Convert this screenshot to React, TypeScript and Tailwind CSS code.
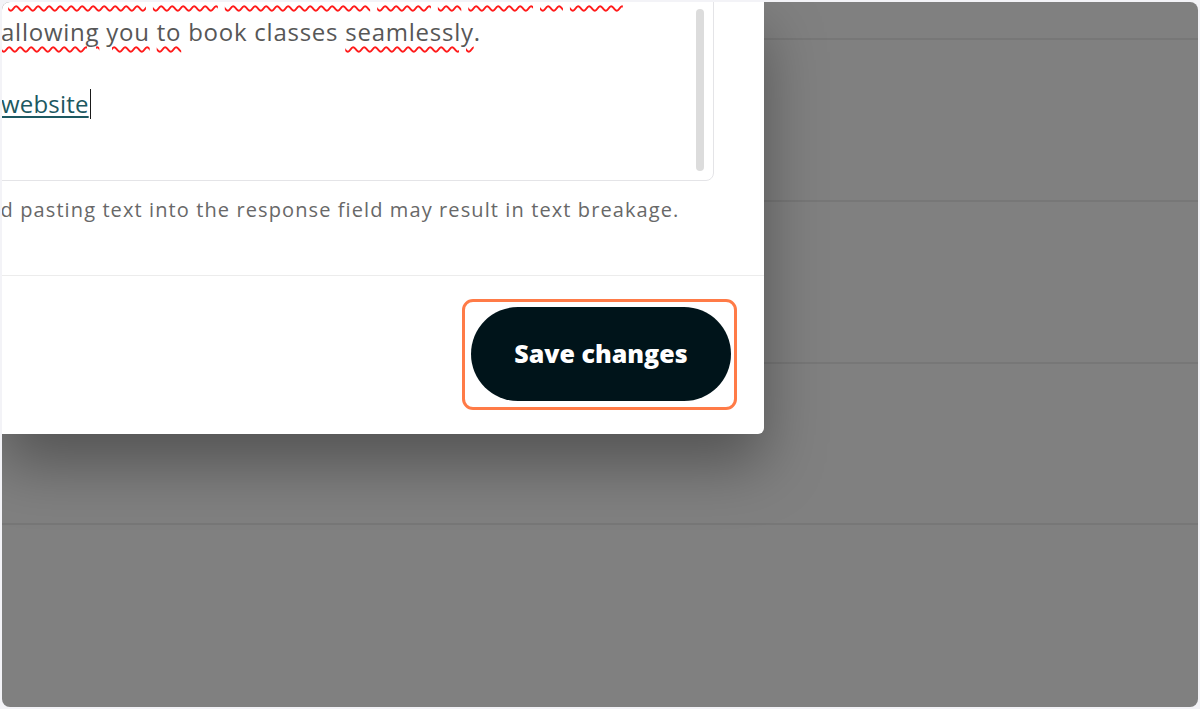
const squiggle =
  "underline decoration-wavy decoration-[#ff1a1a] decoration-[1.5px] underline-offset-[5px]";
const squiggleTop =
  "underline decoration-wavy decoration-[#ff1a1a] decoration-[1.5px] underline-offset-[9px]";

const BackdropRows = () => (
  <div className="flex flex-col">
    <div className="h-[38px] border-b-2 border-[#777777]" />
    <div className="h-[162px] border-b-2 border-[#777777]" />
    <div className="h-[162px] border-b-2 border-[#777777]" />
    <div className="h-[161px] border-b-2 border-[#777777]" />
  </div>
);

const Editor = () => (
  <div className="-mt-[25px] -ml-[20px] h-[204px] w-[732px] rounded-[8px] border border-[#e4e4e7] relative overflow-hidden">
    <div className="pl-[18px] pr-[40px] text-[24px] leading-[36px] tracking-[0.75px] text-[#575757]">
      <p className="whitespace-nowrap -ml-[12px] -mt-[9px] mb-[9px]">
        <span className={squiggleTop}>s</span>{" "}
        <span className={squiggleTop}>bookingsite</span>{" "}
        <span className={squiggleTop}>vores</span>{" "}
        <span className={squiggleTop}>hjemmeside</span>{" "}
        <span className={squiggleTop}>gøre</span>{" "}
        <span className={squiggleTop}>at</span>{" "}
        <span className={squiggleTop}>bestil</span>{" "}
        <span className={squiggleTop}>af</span>{" "}
        <span className={squiggleTop}>hold</span>
      </p>
      <p className="whitespace-nowrap">
        <span className={squiggle}>allowing</span>{" "}
        <span className={squiggle}>you</span>{" "}
        <span className={squiggle}>to</span> book classes{" "}
        <span className={squiggle}>seamlessly</span>.
      </p>
      <p className="h-[36px]" />
      <p className="whitespace-nowrap flex items-center">
        <span className="text-[#1c5861] underline decoration-[1.5px] underline-offset-[3px] tracking-[0.2px]">
          website
        </span>
        <span className="ml-[1px] inline-block w-[1.5px] h-[30px] bg-[#1a1a1a]" />
      </p>
    </div>
    <div className="absolute right-[9px] top-[31px] w-[8px] h-[162px] rounded-full bg-[#dcdcdc]" />
  </div>
);

export default function App() {
  return (
    <div
      className="w-[1200px] h-[709px] bg-[#f3f3f7] p-[2px]"
      style={{ fontFamily: "'Open Sans', 'Noto Sans', sans-serif" }}
    >
      <div className="relative h-full rounded-[8px] overflow-hidden bg-[#808080]">
        <BackdropRows />

        <div className="absolute left-0 top-0 w-[762px] h-[432px] bg-white rounded-br-[6px] shadow-[0_30px_60px_rgba(0,0,0,0.35)] flex flex-col overflow-hidden">
          <Editor />

          <p className="mt-[17px] whitespace-nowrap -ml-[27px] text-[20px] leading-[24px] tracking-[1.1px] text-[#686868]">
            and pasting text into the response field may result in text breakage.
          </p>

          <div className="mt-[53px] border-t border-[#ececec] flex justify-end pt-[23px] pr-[27px]">
            <div className="rounded-[11px] border-[3px] border-[#ff7b47] pl-[6px] pr-[3px] pt-[5px] pb-[6px]">
              <button className="w-[260px] h-[94px] rounded-full bg-[#00141a] text-white text-[25px] font-extrabold tracking-[0px]">
                Save changes
              </button>
            </div>
          </div>
        </div>
      </div>
    </div>
  );
}
